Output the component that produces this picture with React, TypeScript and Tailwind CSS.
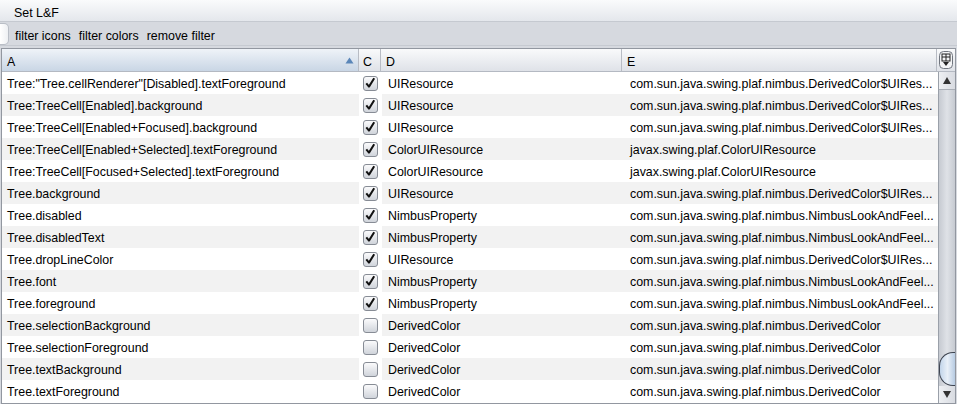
import React from "react";

const rows: [string, boolean, string, string][] = [
  ['Tree:"Tree.cellRenderer"[Disabled].textForeground', true, "UIResource", "com.sun.java.swing.plaf.nimbus.DerivedColor$UIRes..."],
  ["Tree:TreeCell[Enabled].background", true, "UIResource", "com.sun.java.swing.plaf.nimbus.DerivedColor$UIRes..."],
  ["Tree:TreeCell[Enabled+Focused].background", true, "UIResource", "com.sun.java.swing.plaf.nimbus.DerivedColor$UIRes..."],
  ["Tree:TreeCell[Enabled+Selected].textForeground", true, "ColorUIResource", "javax.swing.plaf.ColorUIResource"],
  ["Tree:TreeCell[Focused+Selected].textForeground", true, "ColorUIResource", "javax.swing.plaf.ColorUIResource"],
  ["Tree.background", true, "UIResource", "com.sun.java.swing.plaf.nimbus.DerivedColor$UIRes..."],
  ["Tree.disabled", true, "NimbusProperty", "com.sun.java.swing.plaf.nimbus.NimbusLookAndFeel..."],
  ["Tree.disabledText", true, "NimbusProperty", "com.sun.java.swing.plaf.nimbus.NimbusLookAndFeel..."],
  ["Tree.dropLineColor", true, "UIResource", "com.sun.java.swing.plaf.nimbus.DerivedColor$UIRes..."],
  ["Tree.font", true, "NimbusProperty", "com.sun.java.swing.plaf.nimbus.NimbusLookAndFeel..."],
  ["Tree.foreground", true, "NimbusProperty", "com.sun.java.swing.plaf.nimbus.NimbusLookAndFeel..."],
  ["Tree.selectionBackground", false, "DerivedColor", "com.sun.java.swing.plaf.nimbus.DerivedColor"],
  ["Tree.selectionForeground", false, "DerivedColor", "com.sun.java.swing.plaf.nimbus.DerivedColor"],
  ["Tree.textBackground", false, "DerivedColor", "com.sun.java.swing.plaf.nimbus.DerivedColor"],
  ["Tree.textForeground", false, "DerivedColor", "com.sun.java.swing.plaf.nimbus.DerivedColor"],
];

function CheckBox({ checked }: { checked: boolean }) {
  return (
    <div className="w-[15px] h-[15px] rounded-[3px] border border-[#878c95] bg-gradient-to-b from-[#fbfbfc] to-[#d0d4db] flex items-center justify-center">
      {checked && (
        <svg width="12" height="12" viewBox="0 0 12 12">
          <path d="M2.3 6.3 L5 9.6 L10.2 1.2" fill="none" stroke="#111" strokeWidth="2" strokeLinejoin="round" />
        </svg>
      )}
    </div>
  );
}

export default function App() {
  return (
    <div
      className="w-[957px] h-[404px] bg-[#d6d9df] text-black overflow-hidden flex flex-col text-[12.4px] leading-none"
      style={{ fontFamily: '"Liberation Sans", Arial, sans-serif' }}
    >
      {/* menu bar */}
      <div className="h-[22px] shrink-0 bg-gradient-to-b from-[#fafbfc] to-[#e4e7ec] border-b border-[#c5c9d0] flex items-center pt-[6px]">
        <span className="pl-[14px]">Set L&amp;F</span>
      </div>
      {/* toolbar */}
      <div className="h-[24px] shrink-0 flex items-center border-b border-[#c6cad1] bg-[#d6d9df]">
        <div className="w-[9px] h-[22px] rounded-r-[5px] bg-gradient-to-r from-white to-[#eef0f3] border border-l-0 border-[#b9bec6] mr-[6px]" />
        <div className="flex items-center pt-[6px]">
          <span>filter icons</span>
          <span className="ml-[8px]">filter colors</span>
          <span className="ml-[8px]">remove filter</span>
        </div>
      </div>
      {/* table */}
      <div className="mt-[2px] ml-[1px] mr-[1px] flex-1 border border-[#9297a0] bg-white flex flex-col">
        {/* header */}
        <div className="h-[23px] shrink-0 flex border-b border-[#b4b9c2] bg-gradient-to-b from-[#f9fafb] to-[#dfe2e8]">
          <div className="w-[357px] flex items-center pl-[5px] pt-[5px] border-r border-[#b8bcc4] bg-gradient-to-b from-[#eff3f8] to-[#c9d6e5] relative">
            <span>A</span>
            <svg className="absolute right-[4px] top-[8px]" width="9" height="7" viewBox="0 0 9 7">
              <path d="M0.5 6.5 L4.5 0.5 L8.5 6.5 Z" fill="#5a86b8" />
            </svg>
          </div>
          <div className="w-[22px] flex items-center pl-[4px] pt-[5px] border-r border-[#b8bcc4]">C</div>
          <div className="w-[241px] flex items-center pl-[5px] pt-[5px] border-r border-[#b8bcc4]">D</div>
          <div className="w-[315px] flex items-center pl-[5px] pt-[5px] border-r border-[#b8bcc4]">E</div>
          <div className="flex-1 flex items-center justify-center">
            <svg width="14" height="18" viewBox="0 0 14 18">
              <rect x="0.5" y="0.5" width="13" height="17" rx="4" fill="#f3f4f6" stroke="#70757e" />
              <rect x="3" y="3" width="8" height="7" fill="none" stroke="#222" />
              <path d="M3 6 H11 M7 3 V10" stroke="#222" />
              <path d="M4 11 H10 L7 15 Z" fill="#222" />
            </svg>
          </div>
        </div>
        {/* body */}
        <div className="flex-1 flex">
          <div className="flex-1 flex flex-col">
            {rows.map((r, i) => {
              const bg = i % 2 === 0 ? "bg-white" : "bg-[#f2f2f2]";
              return (
                <div key={i} className="h-[22px] flex">
                  <div className={`w-[357px] ${bg} flex items-center pl-[5px] pt-[2px] whitespace-nowrap`}>{r[0]}</div>
                  <div className="w-[23px] bg-white flex items-center justify-center pr-[1px]">
                    <CheckBox checked={r[1]} />
                  </div>
                  <div className={`w-[241px] ${bg} flex items-center pl-[6px] pt-[2px]`}>{r[2]}</div>
                  <div className={`flex-1 ${bg} flex items-center pl-[7px] pt-[2px] whitespace-nowrap`}>{r[3]}</div>
                </div>
              );
            })}
          </div>
          {/* scrollbar */}
          <div className="w-[17px] shrink-0 flex flex-col border-l border-[#9aa0a9] bg-gradient-to-r from-[#c6cad1] via-[#dfe2e7] to-[#c6cad1]">
            <div className="h-[18px] flex items-center justify-center bg-gradient-to-r from-[#eef0f3] to-[#d8dbe1] border-b border-[#a9aeb6]">
              <svg width="8" height="7" viewBox="0 0 8 7"><path d="M0 7 L4 0 L8 7 Z" fill="#333" /></svg>
            </div>
            <div className="flex-1" />
            <div className="h-[34px] rounded-l-[14px] border border-r-0 border-[#3e4450] bg-gradient-to-r from-[#c2d5ea] via-[#e9f0f8] to-[#b7cbe2]" />
            <div className="h-[17px] flex items-center justify-center bg-gradient-to-r from-[#eef0f3] to-[#d8dbe1]">
              <svg width="8" height="7" viewBox="0 0 8 7"><path d="M0 0 L4 7 L8 0 Z" fill="#333" /></svg>
            </div>
          </div>
        </div>
      </div>
    </div>
  );
}
